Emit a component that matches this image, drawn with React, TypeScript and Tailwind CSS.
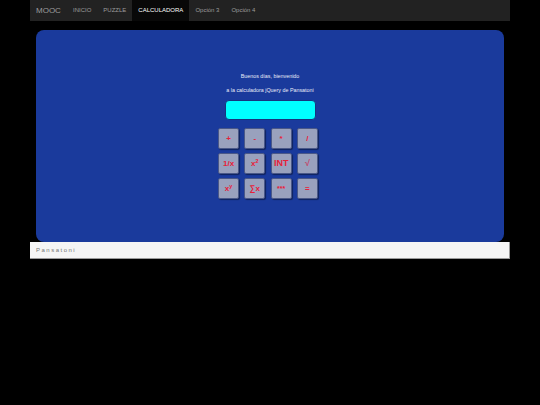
import React from 'react';

const navItems = ['INICIO', 'PUZZLE', 'CALCULADORA', 'Opción 3', 'Opción 4'];

const keys: { label: React.ReactNode; style: string }[] = [
  { label: '+', style: 'text-[8px] text-[#e8203a]' },
  { label: '-', style: 'text-[8px] text-[#e8203a]' },
  { label: '*', style: 'text-[8px] text-[#e8203a]' },
  { label: '/', style: 'text-[8px] text-[#e8203a]' },
  { label: '1/x', style: 'text-[8px] text-[#e8203a]' },
  { label: <>x<sup className="text-[5.5px]">2</sup></>, style: 'text-[8px] text-[#e8203a]' },
  { label: 'INT', style: 'text-[9px] text-[#e8203a]' },
  { label: '√', style: 'text-[9px] text-[#c4486a]' },
  { label: <>x<sup className="text-[5.5px]">y</sup></>, style: 'text-[8px] text-[#e8203a]' },
  { label: '∑x', style: 'text-[8px] text-[#e8203a]' },
  { label: '***', style: 'text-[7px] text-[#e8203a]' },
  { label: '=', style: 'text-[8px] text-[#e8203a]' },
];

export default function App() {
  return (
    <div className="min-h-[405px] bg-black font-['Liberation_Sans',sans-serif]">
      <div className="mx-auto w-[480px]">
        <nav className="flex h-[21px] items-stretch bg-[#222222]">
          <span className="flex w-[37px] items-center pl-[6px] text-[8px] text-[#9d9d9d]">MOOC</span>
          <ul className="flex">
            {navItems.map(item => (
              <li
                key={item}
                className={`flex items-center px-[6px] text-[6px] ${item === 'CALCULADORA' ? 'bg-[#080808] text-white' : 'text-[#9d9d9d]'}`}
              >
                {item}
              </li>
            ))}
          </ul>
        </nav>

        <main className="mx-[6px] mt-[9px] flex h-[212px] flex-col items-center rounded-[8px] bg-[#1a3a9c] pt-[43px] text-[5.35px] text-[#e8ecf8]">
          <p className="leading-[7px]">Buenos días, bienvenido</p>
          <p className="mt-[7px] leading-[7px]">a la calculadora jQuery de Pansatoni</p>
          <div className="mt-[6px] h-[20px] w-[91px] rounded-[4px] border border-[#16357f] bg-[#00ffff]" />
          <div className="mr-[4px] mt-[8px] grid grid-cols-[repeat(4,21px)] grid-rows-[repeat(3,21px)] gap-x-[5.3px] gap-y-[4px]">
            {keys.map((key, i) => (
              <button
                key={i}
                className={`flex items-center justify-center rounded-[2px] border border-[#4a5888] bg-[#99a1bd] font-bold leading-none shadow-[1px_1px_1px_rgba(0,0,0,0.4)] ${key.style}`}
              >
                <span>{key.label}</span>
              </button>
            ))}
          </div>
        </main>

        <footer className="flex h-[17px] items-center border-b border-r border-[#9a9a9a] bg-[#f5f5f5] pl-[6px] text-[6px] tracking-[1.5px] text-[#777777]">
          Pansatoni
        </footer>
      </div>
    </div>
  );
}
